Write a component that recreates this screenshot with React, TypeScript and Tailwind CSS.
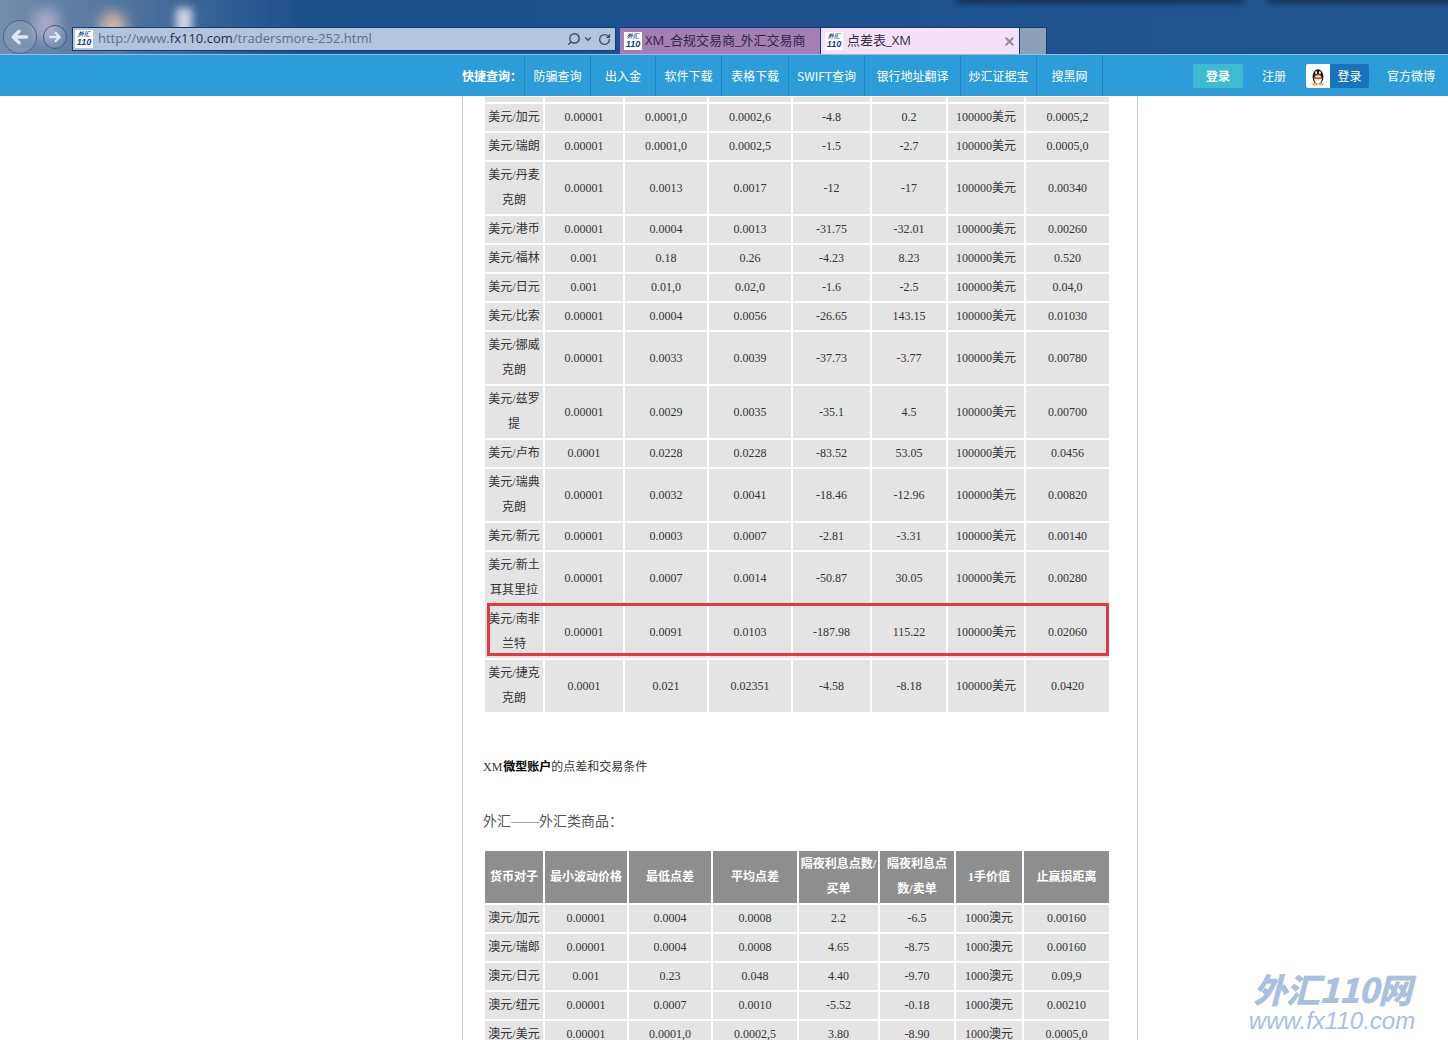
import { RotateCw, Search, X, ChevronDown } from "lucide-react";

const font = "font-['Liberation_Serif','Noto_Sans_CJK_SC',serif]";
const cjk = "font-['Noto_Sans_CJK_SC','Liberation_Sans',sans-serif]";

const navItems = [
  { label: "防骗查询", w: "w-[66px]" },
  { label: "出入金", w: "w-[65px]" },
  { label: "软件下载", w: "w-[66px]" },
  { label: "表格下载", w: "w-[67px]" },
  { label: "SWIFT查询", w: "w-[76px]" },
  { label: "银行地址翻译", w: "w-[96px]" },
  { label: "炒汇证据宝", w: "w-[76px]" },
  { label: "搜黑网", w: "w-[66px]" },
];

const usdRows = [
  ["美元/加元", "0.00001", "0.0001,0", "0.0002,6", "-4.8", "0.2", "0.0005,2"],
  ["美元/瑞朗", "0.00001", "0.0001,0", "0.0002,5", "-1.5", "-2.7", "0.0005,0"],
  ["美元/丹麦克朗", "0.00001", "0.0013", "0.0017", "-12", "-17", "0.00340"],
  ["美元/港币", "0.00001", "0.0004", "0.0013", "-31.75", "-32.01", "0.00260"],
  ["美元/福林", "0.001", "0.18", "0.26", "-4.23", "8.23", "0.520"],
  ["美元/日元", "0.001", "0.01,0", "0.02,0", "-1.6", "-2.5", "0.04,0"],
  ["美元/比索", "0.00001", "0.0004", "0.0056", "-26.65", "143.15", "0.01030"],
  ["美元/挪威克朗", "0.00001", "0.0033", "0.0039", "-37.73", "-3.77", "0.00780"],
  ["美元/兹罗提", "0.00001", "0.0029", "0.0035", "-35.1", "4.5", "0.00700"],
  ["美元/卢布", "0.0001", "0.0228", "0.0228", "-83.52", "53.05", "0.0456"],
  ["美元/瑞典克朗", "0.00001", "0.0032", "0.0041", "-18.46", "-12.96", "0.00820"],
  ["美元/新元", "0.00001", "0.0003", "0.0007", "-2.81", "-3.31", "0.00140"],
  ["美元/新土耳其里拉", "0.00001", "0.0007", "0.0014", "-50.87", "30.05", "0.00280"],
  ["美元/南非兰特", "0.00001", "0.0091", "0.0103", "-187.98", "115.22", "0.02060"],
  ["美元/捷克克朗", "0.0001", "0.021", "0.02351", "-4.58", "-8.18", "0.0420"],
];

const audRows = [
  ["澳元/加元", "0.00001", "0.0004", "0.0008", "2.2", "-6.5", "0.00160"],
  ["澳元/瑞郎", "0.00001", "0.0004", "0.0008", "4.65", "-8.75", "0.00160"],
  ["澳元/日元", "0.001", "0.23", "0.048", "4.40", "-9.70", "0.09,9"],
  ["澳元/纽元", "0.00001", "0.0007", "0.0010", "-5.52", "-0.18", "0.00210"],
  ["澳元/美元", "0.00001", "0.0001,0", "0.0002,5", "3.80", "-8.90", "0.0005,0"],
];

const audHead = ["货币对子", "最小波动价格", "最低点差", "平均点差", "隔夜利息点数/买单", "隔夜利息点数/卖单", "1手价值", "止赢损距离"];

const Favicon = () => (
  <span className="flex h-[18px] w-[18px] shrink-0 flex-col items-center justify-center bg-white font-['Liberation_Sans',sans-serif] font-bold italic leading-none text-[#123f86]">
    <span className="text-[6px] leading-[7px]">外汇</span>
    <span className="text-[9px] leading-[9px]">110</span>
  </span>
);

const Arrow = ({ flip }: { flip?: boolean }) => (
  <svg viewBox="0 0 24 24" className={flip ? "h-full w-full rotate-180" : "h-full w-full"} fill="none" stroke="#dfe8f2" strokeWidth="4" strokeLinecap="round" strokeLinejoin="round">
    <path d="M20 12H5M11 5l-7 7 7 7" />
  </svg>
);

const Penguin = () => (
  <svg viewBox="0 0 24 24" className="h-[20px] w-[20px]">
    <ellipse cx="12" cy="13" rx="6.5" ry="9" fill="#1a1a1a" />
    <ellipse cx="12" cy="16" rx="4.5" ry="5.5" fill="#fff" />
    <ellipse cx="9.8" cy="8" rx="1.2" ry="1.7" fill="#fff" />
    <ellipse cx="14.2" cy="8" rx="1.2" ry="1.7" fill="#fff" />
    <path d="M8 10.5h8l-4 2.2z" fill="#f5a623" />
    <path d="M7 12.5c3 1.6 7 1.6 10 0v2.2c-3 1.5-7 1.5-10 0z" fill="#e5322d" />
    <ellipse cx="8" cy="22" rx="3.2" ry="1.4" fill="#f5a623" />
    <ellipse cx="16" cy="22" rx="3.2" ry="1.4" fill="#f5a623" />
  </svg>
);

const Chrome = () => (
  <div className="relative flex h-[55px] items-end overflow-hidden border-b border-b-[#8fc0e6] bg-gradient-to-r from-[#1c4f8c] via-[#1c508e] to-[#20568f]">
    <div className="absolute left-0 top-0 h-[55px] w-[300px] bg-gradient-to-r from-[#8a9cb4] to-transparent opacity-80" />
    <div className="absolute left-[100px] top-[12px] h-[34px] w-[26px] rounded-full bg-[#d8b8a8] blur-[7px]" />
    <div className="absolute left-[176px] top-[8px] h-[36px] w-[16px] bg-[#cfd8e2] blur-[4px]" />
    <div className="absolute left-[34px] top-[10px] h-[30px] w-[24px] bg-[#a8a8c8] blur-[6px]" />
    <div className="absolute left-[960px] top-[-4px] h-[4px] w-[280px] bg-black/60 shadow-[0_0_6px_3px_rgba(0,0,0,0.45)]" />
    <div className="absolute left-[1272px] top-[-4px] h-[4px] w-[180px] bg-black/60 shadow-[0_0_6px_3px_rgba(0,0,0,0.45)]" />

    <div className="relative mb-[-1px] flex h-[36px] w-[72px] shrink-0 items-center pl-[3px]">
      <span className="h-[34px] w-[34px] rounded-full border border-[#49648a] bg-white/10 p-[6px]">
        <Arrow />
      </span>
      <span className="ml-[6px] h-[24px] w-[24px] rounded-full border border-[#3b5a86] bg-white/10 p-[4px]">
        <Arrow flip />
      </span>
    </div>

    <div className="relative mb-[3px] flex h-[24px] w-[544px] shrink-0 items-center border border-[#123a6c] bg-[#b3c5dd] pl-[2px] font-['Open_Sans',sans-serif] text-[13px] text-[#5c6f8a]">
      <Favicon />
      <span className="ml-[5px]">
        http://www.<span className="text-[#1f2a3c]">fx110.com</span>/tradersmore-252.html
      </span>
      <span className="ml-auto flex items-center pr-[4px] text-[#3d4f66]">
        <Search size={14} strokeWidth={2.5} className="-scale-x-100" />
        <ChevronDown size={10} strokeWidth={3} className="ml-[2px]" />
        <RotateCw size={13} strokeWidth={2.5} className="ml-[5px]" />
      </span>
    </div>

    <div className="relative ml-[4px] flex h-[27px] w-[200px] shrink-0 items-center border-t border-t-[#123a6c] bg-[#a47fb6] pl-[4px] font-['Open_Sans','Noto_Sans_CJK_SC',sans-serif] text-[13px] text-[#2d2440]">
      <Favicon />
      <span className="ml-[3px]">XM_合规交易商_外汇交易商</span>
    </div>
    <div className="relative flex h-[27px] w-[200px] shrink-0 items-center border-x border-t border-[#123a6c] bg-[#f6dff9] pl-[4px] font-['Open_Sans','Noto_Sans_CJK_SC',sans-serif] text-[13px] text-[#2f2f3a]">
      <Favicon />
      <span className="ml-[4px]">点差表_XM</span>
      <X size={13} strokeWidth={3.5} className="ml-auto mr-[3px] text-[#8d8d95]" />
    </div>
    <div className="relative h-[27px] w-[27px] shrink-0 border-r border-t border-[#123a6c] bg-[#8b9fb7]" />
  </div>
);

const TopNav = () => (
  <div className={`flex h-[41px] items-center bg-[#2d9dd9] text-[12px] text-white ${cjk}`}>
    <span className="ml-[462px] w-[62px] shrink-0 font-bold">快捷查询：</span>
    <div className="flex h-full shrink-0 border-l border-l-[#1f86bf]">
      {navItems.map((item) => (
        <span key={item.label} className={`flex h-full items-center justify-center border-r border-r-[#1f86bf] ${item.w}`}>
          {item.label}
        </span>
      ))}
    </div>
    <span className="ml-[90px] flex h-[24px] w-[50px] shrink-0 items-center justify-center rounded-[2px] bg-[#3dbccf] font-bold">登录</span>
    <span className="ml-[19px] w-[26px] shrink-0">注册</span>
    <span className="ml-[18px] flex h-[24px] w-[63px] shrink-0 overflow-hidden rounded-[2px]">
      <span className="flex w-[24px] items-center justify-center bg-white">
        <Penguin />
      </span>
      <span className="flex flex-1 items-center justify-center bg-[#1773ba]">登录</span>
    </span>
    <span className="ml-[18px] shrink-0">官方微博</span>
  </div>
);

const usdWidths = ["w-[58px]", "w-[78px]", "w-[82px]", "w-[82px]", "w-[77px]", "w-[74px]", "w-[76px]", "w-[83px]"];
const audWidths = ["w-[58px]", "w-[82px]", "w-[82px]", "w-[84px]", "w-[79px]", "w-[74px]", "w-[66px]", "w-[85px]"];

const Cols = ({ widths }: { widths: string[] }) => (
  <colgroup>
    {widths.map((w, i) => (
      <col key={i} className={w} />
    ))}
  </colgroup>
);

const Row = ({ cells, unit }: { cells: string[]; unit: string }) => {
  const [pair, a, b, c, d, e, f] = cells;
  return (
    <tr>
      {[pair, a, b, c, d, e, unit, f].map((v, i) => (
        <td key={i} className="bg-[#e4e4e4] px-0 py-px text-center leading-[25px]">
          {v}
        </td>
      ))}
    </tr>
  );
};

const tableCls = "w-[628px] table-fixed border-separate border-spacing-[2px] text-[12px] text-[#333]";

export default function App() {
  return (
    <div className={`relative h-[1040px] overflow-hidden bg-white ${font}`}>
      <Chrome />
      <TopNav />

      <div className="ml-[462px] h-[944px] w-[676px] border-x border-x-[#c8c8c8] pl-[20px] pt-[1px]">
        <div className="relative w-[628px] -translate-y-[2px]">
          <table className={tableCls}>
            <Cols widths={usdWidths} />
            <tbody>
              <tr>
                {usdWidths.map((w) => (
                  <td key={w} className="h-[5px] bg-[#e4e4e4] p-0" />
                ))}
              </tr>
              {usdRows.map((r) => (
                <Row key={r[0]} cells={r} unit="100000美元" />
              ))}
            </tbody>
          </table>
          <div className="absolute left-[4px] top-[508px] h-[53px] w-[622px] border-[3px] border-[#e4393f]" />
        </div>

        <p className="mt-[42px] h-[18px] text-[12px] leading-[18px] text-[#333]">
          XM<b className="ml-px text-black">微型账户</b>的点差和交易条件
        </p>
        <p className={`mt-[36px] h-[20px] text-[14px] leading-[20px] text-[#555]`}>外汇——外汇类商品：</p>

        <table className={`${tableCls} mt-[17px]`}>
          <Cols widths={audWidths} />
          <thead>
            <tr>
              {audHead.map((h) => (
                <th key={h} className="bg-[#8e8e8e] px-0 py-px text-center font-bold leading-[25px] text-white">
                  {h}
                </th>
              ))}
            </tr>
          </thead>
          <tbody>
            {audRows.map((r) => (
              <Row key={r[0]} cells={r} unit="1000澳元" />
            ))}
          </tbody>
        </table>
      </div>

      <div className="absolute left-[1237px] top-[970px] w-[190px] text-center font-['Liberation_Sans',sans-serif] italic text-[#a9c0de]">
        <div className={`text-[34px] font-black leading-[38px] tracking-[-1px] ${cjk}`}>外汇110网</div>
        <div className="text-[24px] leading-[26px]">www.fx110.com</div>
      </div>
    </div>
  );
}
